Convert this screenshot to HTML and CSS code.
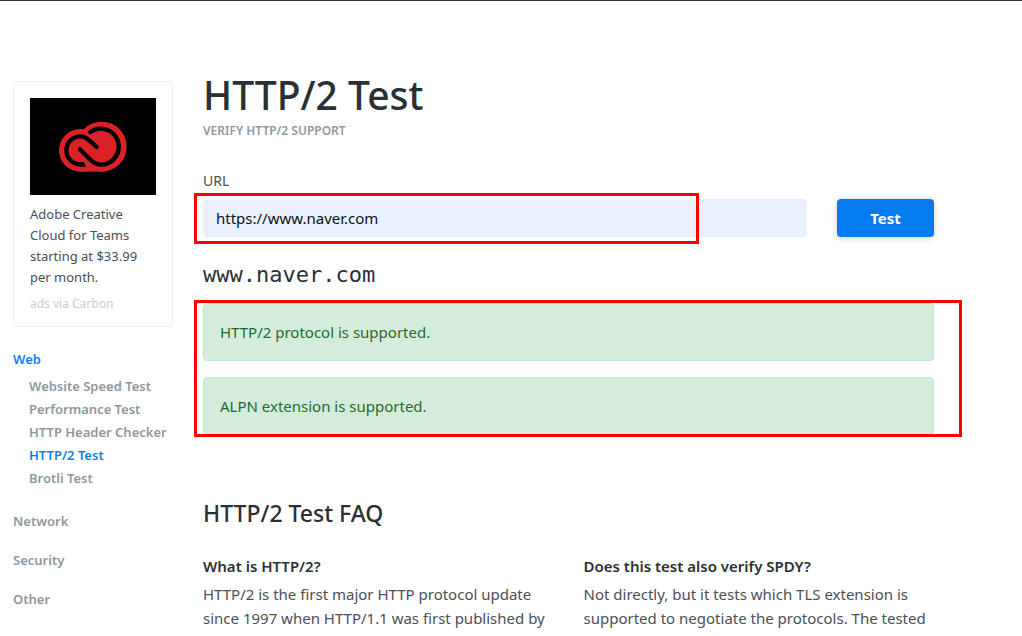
FILE: index.html
```html
<!DOCTYPE html>
<html lang="en">
<head>
    <meta charset="UTF-8">
    <meta name="viewport" content="width=device-width, initial-scale=1.0">
    <title>HTTP/2 Test</title>
    <link rel="stylesheet" href="styles.css">
</head>
<body>
    <div class="page">
        <aside class="sidebar">
            <div class="ad">
                <svg class="ad-image" viewBox="0 0 378 291" role="img" aria-label="Adobe Creative Cloud">
                    <rect width="378" height="291" fill="#000"/>
                    <g transform="translate(60 36)">
                        <circle cx="91" cy="121" r="64" fill="#da2128"/>
                        <circle cx="155" cy="110" r="75" fill="#da2128"/>
                        <path d="M91 120h64v65H91z" fill="#da2128"/>
                        <g fill="none" stroke="#000" stroke-width="13">
                            <path d="M121 66A54 54 0 1 1 155 164C138 164 129 157 118 146L90 118" stroke-linecap="round"/>
                            <path d="M140 111L118 91C109 83 101 79 91 79A42 42 0 0 0 91 163H98" stroke-linecap="round"/>
                            <path d="M91 163H102"/>
                        </g>
                        <path d="M94 156L109 170H102z" fill="#000"/>
                    </g>
                </svg>
                <p class="ad-text">Adobe Creative Cloud for Teams starting at $33.99 per month.</p>
                <a class="ad-via" href="#">ads via Carbon</a>
            </div>

            <nav class="menu">
                <a class="active" href="#">Web</a>
                <div class="submenu">
                    <a href="#">Website Speed Test</a>
                    <a href="#">Performance Test</a>
                    <a href="#">HTTP Header Checker</a>
                    <a class="active" href="#">HTTP/2 Test</a>
                    <a href="#">Brotli Test</a>
                </div>
                <a href="#">Network</a>
                <a href="#">Security</a>
                <a href="#">Other</a>
            </nav>
        </aside>

        <main class="content">
            <h1>HTTP/2 Test</h1>
            <p class="subtitle">Verify HTTP/2 support</p>

            <form class="test-form">
                <label for="url">URL</label>
                <div class="form-row">
                    <input type="text" id="url" value="https://www.naver.com">
                    <button type="submit">Test</button>
                    <div class="mark mark-input"></div>
                </div>
            </form>

            <h2 class="host">www.naver.com</h2>
            <div class="results">
                <div class="alert">HTTP/2 protocol is supported.</div>
                <div class="alert">ALPN extension is supported.</div>
                <div class="mark mark-results"></div>
            </div>

            <h2 class="faq-title">HTTP/2 Test FAQ</h2>
            <div class="faq">
                <section>
                    <h3>What is HTTP/2?</h3>
                    <p>HTTP/2 is the first major HTTP protocol update since 1997 when HTTP/1.1 was first published by</p>
                </section>
                <section>
                    <h3>Does this test also verify SPDY?</h3>
                    <p>Not directly, but it tests which TLS extension is supported to negotiate the protocols. The tested</p>
                </section>
            </div>
        </main>
    </div>
</body>
</html>
```
FILE: styles.css
```css
* {
    box-sizing: border-box;
}

body {
    margin: 0;
    border-top: 1px solid #333;
    font-family: "Noto Sans", "Open Sans", sans-serif;
    font-size: 15px;
    line-height: 24px;
    color: #4a4f54;
    background-color: #fff;
}

h1, h2, h3, p {
    margin: 0;
}

a {
    color: inherit;
    text-decoration: none;
}

.page {
    display: flex;
    gap: 30px;
    padding: 70px 88px 0 13px;
}

/* Sidebar */
.sidebar {
    flex: 0 0 160px;
    padding-top: 10px;
}

.ad {
    padding: 16px 16px 12px;
    border: 1px solid #eee;
    border-radius: 4px;
    font-size: 13px;
    line-height: 21px;
}

.ad-image {
    display: block;
    width: 100%;
    margin-bottom: 9px;
}

.ad-via {
    display: block;
    margin-top: 5px;
    font-size: 12px;
    color: #c9ced3;
}

.menu {
    display: flex;
    flex-direction: column;
    gap: 16px;
    margin-top: 21px;
    font-size: 13px;
    font-weight: 600;
    line-height: 23px;
    color: #8f979e;
}

.submenu {
    display: flex;
    flex-direction: column;
    margin: -12px 0 4px;
    padding-left: 16px;
    white-space: nowrap;
}

.menu .active {
    color: #0d7ff2;
}

/* Main column */
.content {
    flex: 1;
    min-width: 0;
}

h1, h2, h3 {
    color: #2b3035;
    font-weight: 600;
}

h1 {
    font-size: 39px;
    font-weight: 500;
    line-height: 48px;
}

.subtitle {
    font-size: 12px;
    font-weight: 600;
    text-transform: uppercase;
    color: #8f979e;
}

.test-form label {
    display: block;
    margin-top: 26px;
    font-size: 14px;
}

.form-row {
    position: relative;
    display: flex;
    gap: 30px;
    margin-top: 6px;
}

.form-row input {
    flex: 1;
    min-width: 0;
    height: 38px;
    padding: 0 12px;
    border: 1px solid #e9eef8;
    border-radius: 4px;
    background-color: #e8f0fe;
    font: inherit;
    color: #111;
}

.form-row button {
    width: 97px;
    height: 38px;
    border: none;
    border-radius: 4px;
    background-color: #047bef;
    box-shadow: 0 1px 6px rgba(0, 0, 0, 0.2);
    font: inherit;
    font-weight: 700;
    color: #fff;
}

.host {
    margin-top: 24px;
    font-family: "DejaVu Sans Mono", monospace;
    font-size: 22px;
    font-weight: 400;
    line-height: 28px;
}

.results {
    position: relative;
    display: flex;
    flex-direction: column;
    gap: 16px;
    margin-top: 14px;
}

.alert {
    padding: 16px;
    border: 1px solid #c3e6cb;
    border-radius: 4px;
    background-color: #d4edda;
    color: #27682f;
}

/* Red highlight frames */
.mark {
    position: absolute;
    border: 3px solid #f00;
    pointer-events: none;
}

.mark-input {
    top: -6px;
    left: -9px;
    width: 505px;
    height: 51px;
}

.mark-results {
    inset: -3px -28px -2px -9px;
}

.faq-title {
    margin-top: 62px;
    font-size: 23px;
    font-weight: 500;
    line-height: 32px;
}

.faq {
    display: grid;
    grid-template-columns: 1fr 1fr;
    gap: 30px;
    margin-top: 25px;
}

.faq h3 {
    margin-bottom: 4px;
    font-size: 15px;
    line-height: 24px;
}
```
